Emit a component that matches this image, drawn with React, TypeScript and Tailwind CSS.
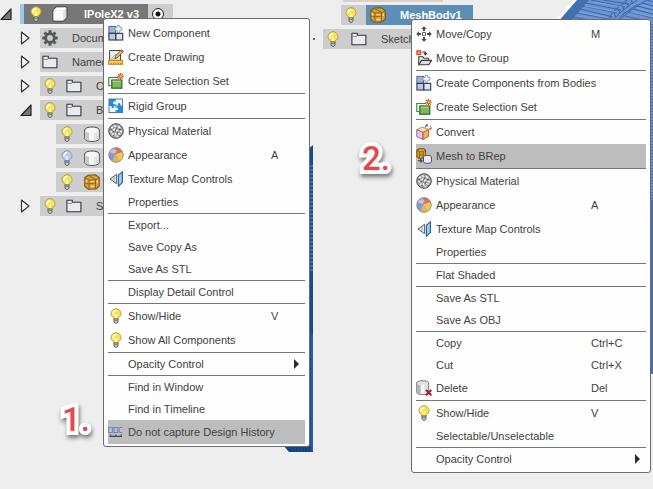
import type { ReactNode } from "react";

type IconName =
  | "component" | "drawing" | "selection" | "rigid" | "physical" | "appearance"
  | "texture" | "bulb" | "history" | "move" | "group" | "convert" | "mesh" | "delete";

function Svg({ children, className = "" }: { children: ReactNode; className?: string }) {
  return (
    <svg viewBox="0 0 16 16" aria-hidden="true" className={`size-4 shrink-0 ${className}`}>
      {children}
    </svg>
  );
}

function Bulb({ off = false }: { off?: boolean }) {
  return (
    <Svg>
      <path
        d="M5.6 11 V9.8 C3.9 8.6 3 7.4 3 5.6 A5 4.9 0 0 1 13 5.6 C13 7.4 12.1 8.6 10.4 9.8 V11 Z"
        fill={off ? "#b9cdf0" : "#f5e45a"}
        stroke={off ? "#8795b5" : "#b29b3c"}
        strokeWidth="0.9"
      />
      <path d="M5.3 6.4 A2.8 2.8 0 0 1 8.2 2.8" fill="none" stroke="#fffde0" strokeWidth="1.6" />
      <path d="M8 6.5 V10" stroke={off ? "#e6eefc" : "#fff7a8"} strokeWidth="2" />
      <path d="M6 11 H10 V14 L9 15.2 H7 L6 14 Z" fill="#d5d5d5" stroke="#55555a" strokeWidth="0.9" />
      <path d="M6 12.7 H10" stroke="#66666a" strokeWidth="0.8" />
    </Svg>
  );
}

function Folder() {
  return (
    <Svg>
      <path d="M0.9 13.8 V2.2 H6.3 V4.2 H14.9 V13.8 Z" fill="#e9ebee" stroke="#33373d" strokeWidth="1.1" strokeLinejoin="round" />
      <path d="M1.4 5.4 H5.6 L6.6 4.4" fill="none" stroke="#6a6e74" strokeWidth="0.8" />
    </Svg>
  );
}

function Cylinder() {
  return (
    <Svg>
      <path d="M0.7 4 C0.7 0 15.3 0 15.3 4 V12.5 C15.3 16.4 0.7 16.4 0.7 12.5 Z" fill="#f7f8f9" stroke="#4b4d50" strokeWidth="1" />
      <path d="M1.3 5.2 C3 7 5 6.8 5 6.8 V14.6 C3 14.6 1.3 14 1.3 12.5 Z" fill="#c6c9cc" />
      <path d="M10 6.9 C12 6.8 14 6 14.7 5.2 V12.5 C14.4 14 12 14.6 10 14.7 Z" fill="#e1e3e5" />
    </Svg>
  );
}

function MeshBody() {
  return (
    <Svg>
      <path d="M0.8 3.8 L4 1.2 L11.5 0.8 L15.2 3.6 V12 L12 14.9 L4.5 15.2 L0.8 12.4 Z" fill="#d5a13a" stroke="#805711" strokeWidth="1.1" />
      <path d="M0.8 3.8 L5 6 L12 5.8 L15.2 3.6 M5 6 V15 M11.5 6 V15 M4 1.2 L12 5.8 M5 9.8 L11.5 9 M1 9 L5 10" fill="none" stroke="#8a6219" strokeWidth="0.9" />
      <path d="M2.4 5.9 V8.4 M6.3 7.6 H10 M6.5 12.5 H10 M13.3 6.6 V9" stroke="#f6d77e" strokeWidth="1.4" />
    </Svg>
  );
}

function Body() {
  return (
    <Svg>
      <path d="M1 4.3 L4.2 1 H13.5 Q15 1 15 2.5 V11.3 L11.8 15 H2.3 Q1 15 1 13.7 Z" fill="#dfe0e1" stroke="#3d3d3d" strokeWidth="1" />
      <rect x="1.5" y="4.6" width="9.8" height="9.9" rx="1.3" fill="#f9f9f9" />
      <path d="M2 4.2 L4.5 1.6 H14 L11.6 4.2 Z" fill="#fff" />
    </Svg>
  );
}

function Gear() {
  return (
    <Svg>
      <circle cx="8" cy="8" r="4.3" fill="none" stroke="#55585b" strokeWidth="2.7" />
      <g stroke="#55585b" strokeWidth="3">
        <path d="M8 0.3 V3 M8 13 V15.7 M0.3 8 H3 M13 8 H15.7 M2.5 2.5 L4.5 4.5 M11.5 11.5 L13.5 13.5 M13.5 2.5 L11.5 4.5 M4.5 11.5 L2.5 13.5" />
      </g>
    </Svg>
  );
}

function Burst() {
  return (
    <>
      <path d="M12.5 0 V6.6 M9.2 3.3 H15.8 M10.2 1 L14.8 5.6 M14.8 1 L10.2 5.6" stroke="#d4511d" strokeWidth="1.1" />
      <circle cx="12.5" cy="3.3" r="1.1" fill="#ffe34a" />
    </>
  );
}

function Icon({ name }: { name: IconName }) {
  switch (name) {
    case "bulb":
      return <Bulb />;
    case "component":
      return (
        <Svg>
          <rect x="0.9" y="1.4" width="6.6" height="6.8" fill="#9fb5d4" stroke="#4d6484" />
          <rect x="0.9" y="8.4" width="6.8" height="6.6" fill="#b9c8de" stroke="#303946" strokeWidth="1.1" />
          <rect x="7.9" y="8.4" width="6.8" height="6.6" fill="#dde4ee" stroke="#303946" strokeWidth="1.1" />
          <path d="M9.2 0.5 H11.8 V2.6 H13.9 V5.2 H11.8 V7.4 H9.2 V5.2 H6.9 V2.6 H9.2 Z" fill="#f5fbff" stroke="#6f8dad" strokeWidth="0.8" />
        </Svg>
      );
    case "drawing":
      return (
        <Svg>
          <path d="M1.6 11.5 V1.5 H12.5 V11.5 Z" fill="#e9edf2" stroke="#40464c" />
          <path d="M3.4 9.8 L8 5 V9.8 Z" fill="#fff" stroke="#8b9298" strokeWidth="0.7" />
          <path d="M6.8 9.6 L7.5 7 L13.3 0.8 L15.3 2.6 L9.4 8.8 Z" fill="#f3bd3d" stroke="#5b4220" strokeWidth="0.8" />
          <path d="M13.1 1 L15.2 2.8" stroke="#d8552d" strokeWidth="1.6" />
          <rect x="0.6" y="11.3" width="14" height="4" fill="#ffd34d" stroke="#b57b13" strokeWidth="0.9" />
          <path d="M3 13.5 V15 M5.5 13.5 V15 M8 13.5 V15 M10.5 13.5 V15 M12.7 13.5 V15" stroke="#9a6810" strokeWidth="0.8" />
        </Svg>
      );
    case "selection":
      return (
        <Svg>
          <path d="M3.2 12.5 H0.8 V4.5 H10" fill="none" stroke="#3b8a35" strokeWidth="1.2" />
          <rect x="3.8" y="7" width="10" height="8.2" fill="#7fba5e" stroke="#2c5f29" strokeWidth="1.2" />
          <path d="M4.5 8.2 H13" stroke="#b6dd99" />
          <Burst />
        </Svg>
      );
    case "rigid":
      return (
        <Svg>
          <rect x="1" y="1" width="13.6" height="13.6" fill="#1d8fe3" stroke="#5d6d7a" strokeWidth="0.9" />
          <path d="M7.6 1.5 H14.1 V7.6 H12.2 Q12.9 5 11.1 5 Q9.3 5 10 7.6 H7.6 V6.1 Q5 6.8 5 4.9 Q5 3.1 7.6 3.8 Z" fill="#eef8ff" />
          <path d="M1.5 7.9 H3.6 Q2.9 10.3 4.7 10.3 Q6.5 10.3 5.8 7.9 H7.6 V9.8 Q10.2 9.1 10.2 11 Q10.2 12.8 7.6 12.1 V14.1 H1.5 Z" fill="#eef8ff" />
        </Svg>
      );
    case "physical":
      return (
        <Svg>
          <circle cx="8" cy="8" r="7.3" fill="#a4a4a4" stroke="#4b4b4b" />
          <path d="M3 5 L5 4 M6 2.5 L8 3.7 M10 3 L12 5 M2.5 8 L4 9.5 M5.2 7 L7.4 6 M8 8 L10.2 7 M12 8 L14 9 M4 12 L5.5 10.5 M7 10.2 L8 12.5 M10 10 L12.2 11.5 M8.5 14 L10.2 13" stroke="#f8f8f8" strokeWidth="1.4" />
          <path d="M4 6.7 L2.5 6 M8.2 5.8 L9 4.5 M6.2 9 L4.8 8.2 M11 6.4 L13 7 M9 10.8 L10 9 M6 13 L5.5 12 M12 13 L12 12 M7.2 7.4 L8 6.5" stroke="#555" strokeWidth="1.1" />
        </Svg>
      );
    case "appearance":
      return (
        <Svg>
          <circle cx="8" cy="8" r="7.5" fill="#7f9dca" />
          <path d="M7.3 7.5 L1 5.3 A7.5 7.5 0 0 1 7.5 0.5 Z" fill="#a9a6b6" />
          <path d="M7.3 7.5 L7.5 0.5 A7.5 7.5 0 0 1 14.7 5 Z" fill="#d9736a" />
          <path d="M7.3 7.5 L14.7 5 A7.5 7.5 0 0 1 11.7 14.5 Z" fill="#f0c850" />
          <path d="M7.3 7.5 L11.7 14.5 A7.5 7.5 0 0 1 4 14.3 Z" fill="#e3b163" />
          <circle cx="8" cy="8" r="7.3" fill="none" stroke="#8d7f78" strokeWidth="0.6" />
          <ellipse cx="5.5" cy="4.3" rx="3" ry="2" fill="#fff" opacity="0.35" />
        </Svg>
      );
    case "texture":
      return (
        <Svg>
          <path d="M2 8 L8.6 3.3 V12.8 Z" fill="#e5e8eb" stroke="#555b61" />
          <path d="M6 5.7 V10.4" stroke="#8a9197" strokeWidth="0.8" />
          <path d="M10.4 4.2 L14.4 0.9 V11.6 L10.4 15.2 Z" fill="#9ccbee" stroke="#1e5f9b" strokeWidth="1.1" />
        </Svg>
      );
    case "history":
      return (
        <Svg>
          <g fill="#b9bfd0" stroke="#6b7da9" strokeWidth="0.9">
            <rect x="0.7" y="3.5" width="3.7" height="5" />
            <rect x="6" y="3.5" width="3.7" height="5" />
            <path d="M14.3 3.5 H11.3 V8.5 H14.3" />
          </g>
          <path d="M1.5 12.3 H14 M2.5 10.5 V12.3 M7.8 10.5 V12.3 M13.2 10.5 V12.3" stroke="#3d4968" strokeWidth="1.2" />
        </Svg>
      );
    case "move":
      return (
        <Svg>
          <path d="M8 0.2 L10.8 3 H9 V5 H7 V3 H5.2 Z M8 15.8 L5.2 13 H7 V11 H9 V13 H10.8 Z M0.2 8 L3 5.2 V7 H5 V9 H3 V10.8 Z M15.8 8 L13 10.8 V9 H11 V7 H13 V5.2 Z" fill="#4b4d50" />
          <rect x="6.6" y="6.6" width="2.8" height="2.8" fill="#fff" stroke="#555" strokeWidth="0.9" />
        </Svg>
      );
    case "group":
      return (
        <Svg>
          <rect x="0.9" y="0.8" width="3.8" height="3.8" fill="#f5a35b" stroke="#c04c18" strokeWidth="1.1" />
          <path d="M6.3 2 H9.4 V4.6 M8 3.2 L9.4 4.8 L10.8 3.2" fill="none" stroke="#38393b" strokeWidth="1.1" />
          <path d="M2.8 14.8 V6.8 H6.8 L7.8 8.3 H12.3 V10.2" fill="#f0f0f0" stroke="#36383a" strokeWidth="1.1" />
          <path d="M2.8 14.8 L5.5 10.4 H15.5 L12.8 14.8 Z" fill="#dcdddf" stroke="#36383a" strokeWidth="1.1" />
        </Svg>
      );
    case "convert":
      return (
        <Svg>
          <path d="M0.8 5.6 L6.4 3 L12.4 5.4 L7 8.5 Z" fill="#ffe0b8" stroke="#b87534" strokeWidth="0.8" />
          <path d="M0.8 5.6 L7 8.5 V15.5 L0.8 12.5 Z" fill="#e3c8ec" stroke="#8a5a99" strokeWidth="0.9" />
          <path d="M12.6 5.4 V12.4 L7 15.5 V8.5 Z" fill="#f5ae62" stroke="#a85f21" strokeWidth="0.9" />
          <path d="M9 3.4 Q9.4 1 11.4 1 M9.8 0.3 L11.7 1 L10.8 2.6" fill="none" stroke="#2f67b6" strokeWidth="1" />
          <path d="M14.3 1.6 Q15.6 3.6 14.4 5.4 M13.1 4.2 L14.3 5.7 L15.6 4.4" fill="none" stroke="#d35a25" strokeWidth="1" />
        </Svg>
      );
    case "mesh":
      return (
        <Svg>
          <path d="M0.8 2.2 L3 0.7 H7.8 L9.6 2.2 V8.6 L7.8 10.2 H3 L0.8 8.6 Z" fill="#dba829" stroke="#765b16" strokeWidth="1.1" />
          <path d="M0.8 2.4 L3.4 3.8 H7.2 L9.6 2.4 M3.4 3.8 V10 M7.2 3.8 V10 M3.4 7 H7.2" stroke="#765b16" strokeWidth="0.9" fill="none" />
          <path d="M7.5 8.8 C7.5 7 15.4 7 15.4 8.8 V13.8 C15.4 15.8 7.5 15.8 7.5 13.8 Z" fill="#eef1f8" stroke="#3f4c78" strokeWidth="1" />
          <path d="M2 12.8 H5.8 M4.3 11.2 L6 12.8 L4.3 14.4" fill="none" stroke="#3b3d40" strokeWidth="1.1" />
        </Svg>
      );
    case "delete":
      return (
        <Svg>
          <path d="M0.7 2.7 C0.7 0.1 12.6 0.1 12.6 2.7 V12.6 C12.6 15.3 0.7 15.3 0.7 12.6 Z" fill="#dfe1e3" stroke="#6b6e71" strokeWidth="0.9" />
          <path d="M1.2 4 Q3 5 4.5 5 V14 Q1.2 13.8 1.2 12.5 Z" fill="#b4b7b9" />
          <path d="M5 4.8 H8 V14 H5 Z" fill="#f6f6f6" />
          <path d="M10 10 L15.3 15.3 M15.3 10 L10 15.3" stroke="#a32026" strokeWidth="2" />
        </Svg>
      );
  }
}

type Entry = {
  label: string;
  icon?: IconName;
  keys?: string;
  submenu?: boolean;
  active?: boolean;
};

const documentMenu: Entry[][] = [
  [
    { label: "New Component", icon: "component" },
    { label: "Create Drawing", icon: "drawing" },
    { label: "Create Selection Set", icon: "selection" },
  ],
  [{ label: "Rigid Group", icon: "rigid" }],
  [
    { label: "Physical Material", icon: "physical" },
    { label: "Appearance", icon: "appearance", keys: "A" },
    { label: "Texture Map Controls", icon: "texture" },
    { label: "Properties" },
  ],
  [{ label: "Export..." }, { label: "Save Copy As" }, { label: "Save As STL" }],
  [{ label: "Display Detail Control" }],
  [
    { label: "Show/Hide", icon: "bulb", keys: "V" },
    { label: "Show All Components", icon: "bulb" },
  ],
  [{ label: "Opacity Control", submenu: true }],
  [
    { label: "Find in Window" },
    { label: "Find in Timeline" },
    { label: "Do not capture Design History", icon: "history", active: true },
  ],
];

const meshMenu: Entry[][] = [
  [
    { label: "Move/Copy", icon: "move", keys: "M" },
    { label: "Move to Group", icon: "group" },
  ],
  [
    { label: "Create Components from Bodies", icon: "component" },
    { label: "Create Selection Set", icon: "selection" },
  ],
  [
    { label: "Convert", icon: "convert" },
    { label: "Mesh to BRep", icon: "mesh", active: true },
  ],
  [
    { label: "Physical Material", icon: "physical" },
    { label: "Appearance", icon: "appearance", keys: "A" },
    { label: "Texture Map Controls", icon: "texture" },
    { label: "Properties" },
  ],
  [{ label: "Flat Shaded" }],
  [{ label: "Save As STL" }, { label: "Save As OBJ" }],
  [
    { label: "Copy", keys: "Ctrl+C" },
    { label: "Cut", keys: "Ctrl+X" },
    { label: "Delete", icon: "delete", keys: "Del" },
  ],
  [
    { label: "Show/Hide", icon: "bulb", keys: "V" },
    { label: "Selectable/Unselectable" },
  ],
  [{ label: "Opacity Control", submenu: true }],
];

function ContextMenu({ groups, name, className, keysClass }: {
  groups: Entry[][];
  name: string;
  className: string;
  keysClass: string;
}) {
  return (
    <div
      role="menu"
      aria-label={name}
      className={`absolute z-10 rounded-[3px] border border-[#6c6c6c] bg-[#fefefe] px-1 py-0.5 ${className}`}
    >
      {groups.map((group, i) => (
        <div key={i} role="group" className={i > 0 ? "border-t border-[#757575]" : ""}>
          {group.map((entry) => (
            <button
              key={entry.label}
              type="button"
              role="menuitem"
              className={`flex w-full items-center gap-1 text-left whitespace-nowrap ${entry.icon ? "h-6" : "h-[22px]"} ${entry.active ? "bg-[#bdbdbd]" : ""}`}
            >
              {entry.icon ? <Icon name={entry.icon} /> : <span className="w-4 shrink-0" />}
              <span className="flex-1">{entry.label}</span>
              {entry.keys && <span className={keysClass}>{entry.keys}</span>}
              {entry.submenu && (
                <svg viewBox="0 0 5 10" aria-hidden="true" className="mr-1.5 h-2.5 w-[5px]">
                  <path d="M0 0 L5 5 L0 10 Z" fill="#2c2c2c" />
                </svg>
              )}
            </button>
          ))}
        </div>
      ))}
    </div>
  );
}

function Toggle({ open = false }: { open?: boolean }) {
  return (
    <button type="button" aria-label={open ? "Collapse" : "Expand"} className="flex w-5 shrink-0 items-center">
      <svg viewBox="0 0 12 14" aria-hidden="true" className="h-3.5 w-3">
        {open ? (
          <path d="M11 2 V12.5 H1 Z" fill="#777" stroke="#222" strokeWidth="1.2" strokeLinejoin="round" />
        ) : (
          <path d="M1.5 1 L9 7 L1.5 13 Z" fill="#f7f7f7" stroke="#333" strokeWidth="1.2" strokeLinejoin="round" />
        )}
      </svg>
    </button>
  );
}

function TreeRow({ open = false, icons, label }: { open?: boolean; icons: ReactNode; label: string }) {
  return (
    <div className="flex h-5 items-center pl-5">
      <Toggle open={open} />
      <div className="flex h-5 flex-1 items-center gap-2 bg-[#cdcdcd] pl-0.5">
        {icons}
        <span className="ml-1.5">{label}</span>
      </div>
    </div>
  );
}

function BodyRow({ children }: { children: ReactNode }) {
  return <div className="ml-14 flex h-5 items-center gap-[9px] bg-[#cdcdcd] pl-[3px]">{children}</div>;
}

function StepLabel({ text, className }: { text: string; className: string }) {
  return (
    <span
      className={`absolute z-20 font-[Roboto,sans-serif] text-[33px] leading-8 font-medium text-[#e5484d] [paint-order:stroke_fill] [stroke-linejoin:round] [-webkit-text-stroke:8px_#fff] drop-shadow-[1px_3px_2px_rgba(0,0,0,0.5)] ${className}`}
    >
      {text}
    </span>
  );
}

function Model() {
  return (
    <svg viewBox="0 0 100 376" aria-hidden="true" className="absolute top-0 left-[553px] h-[376px] w-[100px]">
      <defs>
        <pattern id="lines" width="6" height="3" patternUnits="userSpaceOnUse">
          <path d="M0 0.5 H6" stroke="#3f67ad" />
        </pattern>
      </defs>
      <path d="M2 20 L20 0 H100 V376 H97 V20 Z" fill="#f7f9fc" />
      <path d="M4 23 L24 0 H100 V374 H98 V23 Z" fill="#426fb2" />
      <path d="M16 23 L36 0 H100 V23 Z" fill="#6b95d0" />
      <g fill="none" stroke="#3a66ad" strokeWidth="1">
        <path d="M24 13 L56 19 M27 9 L60 17 M30 6 L64 13 M33 3 L68 10 M38 0 L72 7 M50 0 L76 4 M20 17 L52 23" />
        <path d="M54 20 L62 10 L70 3 L74 0 M60 20 L68 12 L78 4 L84 0 M66 20 L73 14 L84 6 L94 0" />
        <path d="M57 16 L58 22 M61 12 L63 18 M65 9 L67 14 M69 5 L71 10 M73 2 L76 7 M78 0 L80 4 M65 19 L72 13 M70 14 L78 9 M76 10 L85 4" />
        <path d="M76 12 L100 18 M80 9 L100 14 M84 6 L100 10 M89 3 L100 6 M94 0 L100 2 M72 16 L98 22" />
      </g>
      <g fill="none" stroke="#93b5e3" strokeWidth="0.6">
        <path d="M26 12 L56 18 M32 6 L64 12 M40 2 L70 7 M78 12 L100 17 M84 8 L100 12 M90 5 L100 8" />
      </g>
      <path d="M97 23 H100 V200 H97 Z" fill="#6b8fce" />
      <path d="M97 23 H100 V200 H97 Z" fill="url(#lines)" />
    </svg>
  );
}

function ModelEdge() {
  return (
    <svg viewBox="0 0 30 308" aria-hidden="true" className="absolute top-[145px] left-[284px] h-[308px] w-[30px]">
      <defs>
        <pattern id="edge" width="4" height="4" patternUnits="userSpaceOnUse">
          <path d="M0 1 H4" stroke="#4f8ac8" strokeWidth="1.2" />
        </pattern>
        <pattern id="foot" width="3" height="8" patternUnits="userSpaceOnUse">
          <path d="M1 0 V8" stroke="#123672" />
        </pattern>
      </defs>
      <path d="M24 4 L29 0 V307 H5 L0 301 H24 Z" fill="#164c94" />
      <path d="M25 20 H29 V128 H25 Z" fill="url(#edge)" />
      <path d="M28 190 V306" stroke="#3b74bb" />
      <path d="M1 302 H28 V307 H5 Z" fill="url(#foot)" />
    </svg>
  );
}

export default function App() {
  return (
    <main className="relative flex min-h-screen overflow-hidden bg-[#eeeeee] font-['Liberation_Sans',Arial,sans-serif] text-[11px] leading-4 text-[#424242]">
      <Model />
      <ModelEdge />

      <section aria-label="Document browser" className="relative flex w-[173px] shrink-0 flex-col gap-1 pt-1">
        <div className="flex h-5 items-center">
          <Toggle open />
          <div className="flex h-5 flex-1 items-center border-l-4 border-[#9ccbe9] bg-[#777777] pl-1">
            <Bulb />
            <span className="ml-2 flex">
              <Body />
            </span>
            <span className="ml-4 font-bold whitespace-nowrap text-white">IPoleX2 v3</span>
          </div>
          <label className="flex h-5 w-[25px] items-center bg-[#cdcdcd] pl-1">
            <input
              type="radio"
              defaultChecked
              aria-label="Activate component"
              className="m-0 size-3 appearance-none rounded-full border border-[#222] bg-[radial-gradient(circle,#111_0_2px,#fff_3px)]"
            />
          </label>
        </div>
        <div className="flex w-[104px] flex-col gap-1 whitespace-nowrap">
          <TreeRow icons={<Gear />} label="Docum" />
          <TreeRow icons={<Folder />} label="Named" />
          <TreeRow icons={<><Bulb /><Folder /></>} label="O" />
          <TreeRow open icons={<><Bulb /><Folder /></>} label="B" />
          <BodyRow><Bulb /><Cylinder /></BodyRow>
          <BodyRow><Bulb off /><Cylinder /></BodyRow>
          <BodyRow><Bulb /><MeshBody /></BodyRow>
          <TreeRow icons={<><Bulb /><Folder /></>} label="S" />
        </div>
      </section>

      <section aria-label="Mesh browser" className="relative ml-[140px] flex w-40 shrink-0 flex-col gap-1">
        <div className="-mb-px h-0.5 w-[100px] self-center bg-[#dccdca]" />
        <div className="ml-7 flex h-5 items-center">
          <div className="flex h-5 w-[25px] items-center bg-[#cdcdcd] pl-0.5">
            <Bulb />
          </div>
          <div className="flex h-5 flex-1 items-center bg-[#5c8fb8] pl-1">
            <MeshBody />
            <span className="ml-3.5 font-bold text-white">MeshBody1</span>
          </div>
        </div>
        <div className="flex h-5 items-center gap-2">
          <span className="size-0.5 rounded-full bg-[#333]" />
          <div className="flex h-5 w-[90px] items-center bg-[#cdcdcd] pl-0.5">
            <Bulb />
            <span className="ml-2.5 flex">
              <Folder />
            </span>
            <span className="ml-3.5">Sketch</span>
          </div>
        </div>
      </section>

      <ContextMenu groups={documentMenu} name="Document actions" className="top-[18px] left-[103px] w-[207px]" keysClass="w-[34px]" />
      <ContextMenu groups={meshMenu} name="Mesh body actions" className="top-[19px] left-[411px] w-60" keysClass="w-[55px]" />

      <StepLabel text="1." className="top-[404px] left-[62px]" />
      <StepLabel text="2." className="top-[143px] left-[362px]" />
    </main>
  );
}
